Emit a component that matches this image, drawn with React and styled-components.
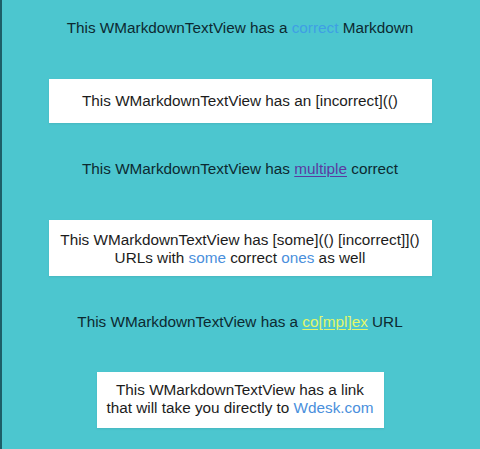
import styled, { createGlobalStyle } from "styled-components";

const GlobalStyle = createGlobalStyle`
  html, body {
    margin: 0;
    padding: 0;
    background: #4cc6cf;
  }
  body {
    font-family: "Liberation Sans", Arial, sans-serif;
  }
`;

const Page = styled.div`
  width: 480px;
  height: 449px;
  box-sizing: border-box;
  background: #4cc6cf;
  box-shadow: inset 2px 0 0 #1d5e68;
  display: flex;
  flex-direction: column;
  align-items: center;
  padding-top: 19px;
  overflow: hidden;
`;

const Plain = styled.p`
  margin: 0 0 ${(p) => p.$after}px;
  font-size: 15.3px;
  line-height: 18px;
  color: #0c2a31;
  text-align: center;
`;

const Card = styled.div`
  width: ${(p) => p.$width}px;
  box-sizing: border-box;
  background: #ffffff;
  padding: ${(p) => p.$top}px 8px ${(p) => p.$bottom}px;
  margin: 0 0 ${(p) => p.$after}px;
  font-size: 15.3px;
  line-height: 18px;
  color: #1c1c1c;
  text-align: center;
  box-shadow: 0 1px 2px rgba(0, 0, 0, 0.08);
`;

const Link = styled.a`
  color: ${(p) => p.$color};
  text-decoration: ${(p) => (p.$underline ? "underline" : "none")};
  text-underline-offset: 2px;
`;

export default function App() {
  return (
    <>
      <GlobalStyle />
      <Page>
        <Plain $after={42}>
          This WMarkdownTextView has a <Link $color="#3f9fe4">correct</Link> Markdown
        </Plain>
        <Card $width={383} $top={13} $bottom={13} $after={37}>
          This WMarkdownTextView has an [incorrect](()
        </Card>
        <Plain $after={42}>
          This WMarkdownTextView has{" "}
          <Link $color="#5b3ba0" $underline>
            multiple
          </Link>{" "}
          correct
        </Plain>
        <Card $width={383} $top={11} $bottom={9} $after={37}>
          This WMarkdownTextView has [some](() [incorrect]]()
          <br />
          URLs with <Link $color="#4a8fdc">some</Link> correct{" "}
          <Link $color="#4a8fdc">ones</Link> as well
        </Card>
        <Plain $after={41}>
          This WMarkdownTextView has a{" "}
          <Link $color="#e4f76a" $underline>
            co[mpl]ex
          </Link>{" "}
          URL
        </Plain>
        <Card $width={287} $top={9} $bottom={11} $after={0}>
          This WMarkdownTextView has a link
          <br />
          that will take you directly to <Link $color="#4a8fdc">Wdesk.com</Link>
        </Card>
      </Page>
    </>
  );
}
